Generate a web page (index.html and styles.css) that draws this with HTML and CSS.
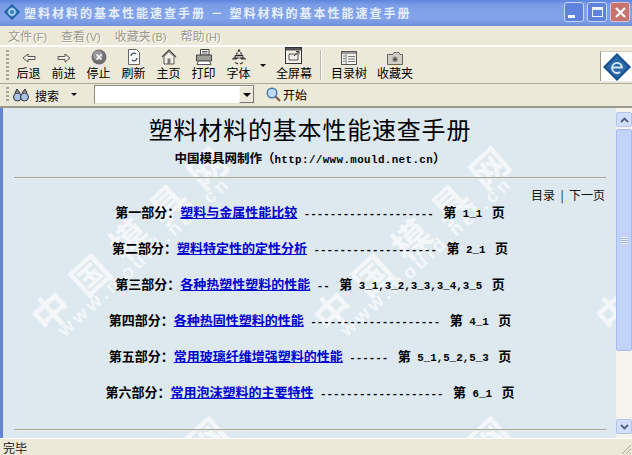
FILE: index.html
```html
<!DOCTYPE html>
<html lang="zh">
<head>
<meta charset="utf-8">
<title>塑料材料的基本性能速查手册</title>
<link rel="stylesheet" href="styles.css">
</head>
<body>
<div class="window">
  <header class="titlebar">
    <svg class="app-icon" viewBox="0 0 16 16" width="16" height="16"><path d="M8 0 16 8 8 16 0 8Z" fill="#1d5a9c"/><path d="M8 2 14 8 8 14 2 8Z" fill="#3f86c8"/><circle cx="8" cy="8" r="3" fill="none" stroke="#bfe0f5" stroke-width="1.3"/></svg>
    <span class="title-text">塑料材料的基本性能速查手册 － 塑料材料的基本性能速查手册</span>
    <div class="caption-btns">
      <span class="cap cap-min"><i></i></span>
      <span class="cap cap-max"><i></i></span>
      <span class="cap cap-close">
        <svg viewBox="0 0 11 11" width="11" height="11"><path d="M1 1 10 10M10 1 1 10" stroke="#fff" stroke-width="2.2"/></svg>
      </span>
    </div>
  </header>

  <nav class="menubar">
    <span class="menu-item">文件<small>(F)</small></span>
    <span class="menu-item">查看<small>(V)</small></span>
    <span class="menu-item">收藏夹<small>(B)</small></span>
    <span class="menu-item">帮助<small>(H)</small></span>
  </nav>

  <div class="toolbar">
    <span class="grip"></span>
    <div class="tool"><svg viewBox="0 0 16 14" width="16" height="14"><path d="M2 7 7 3V5.500H14V8.500H7V11Z" fill="#f1efe3" stroke="#555" stroke-width="1"/></svg><span>后退</span></div>
    <div class="tool"><svg viewBox="0 0 16 14" width="16" height="14"><path d="M14 7 9 3V5.500H2V8.500H9V11Z" fill="#f1efe3" stroke="#555" stroke-width="1"/></svg><span>前进</span></div>
    <div class="tool"><svg viewBox="0 0 16 16" width="16" height="16"><circle cx="8" cy="8" r="7.500" fill="#6f6f72"/><circle cx="7" cy="6.500" r="5" fill="#9a9a9e"/><path d="M5.500 5.500 10.500 10.500M10.500 5.500 5.500 10.500" stroke="#fff" stroke-width="1.600"/></svg><span>停止</span></div>
    <div class="tool"><svg viewBox="0 0 14 16" width="14" height="16"><path d="M1.500 .5H9.500L12.500 3.500V15.500H1.500Z" fill="#f8f8f4" stroke="#666"/><path d="M4 7A3 3 0 0 1 9 5M10 9A3 3 0 0 1 5 11" fill="none" stroke="#456" stroke-width="1.300"/></svg><span>刷新</span></div>
    <div class="tool"><svg viewBox="0 0 16 16" width="16" height="16"><path d="M1 8 8 1 15 8" fill="#eee" stroke="#444" stroke-width="1.200"/><path d="M3 7.500V15H13V7.500L8 2.500Z" fill="#f3f1e6" stroke="#555"/><rect x="6.500" y="9.500" width="3" height="5.500" fill="#777"/></svg><span>主页</span></div>
    <div class="tool"><svg viewBox="0 0 18 16" width="18" height="16"><path d="M5.500 .5H14V6H5.500Z" fill="#fff" stroke="#444"/><path d="M1.500 6H16.500V12H1.500Z" fill="#9f9f9b" stroke="#444"/><path d="M3.500 12H14.500L16 15.500H2Z" fill="#fff" stroke="#555"/><path d="M7 2.500H12.500M7 4H12.500" stroke="#666"/></svg><span>打印</span></div>
    <div class="tool"><svg viewBox="0 0 16 16" width="16" height="16"><path d="M8 1 3 9H13Z" fill="none" stroke="#444" stroke-width="1.400" stroke-dasharray="2 1"/><path d="M1 10H6M6 10 4 8.500M15 10H10M10 10 12 8.500M4 13.500 7 15M12 13.500 9 15" stroke="#333" stroke-width="1.200"/><path d="M5 6.500H11" stroke="#222" stroke-width="1.500"/></svg><span>字体</span></div>
    <span class="drop-arrow"></span>
    <div class="tool tool-wide"><svg viewBox="0 0 18 18" width="18" height="18"><rect x=".5" y=".5" width="16" height="16" fill="#f4f2e8" stroke="#333"/><rect x="1" y="1" width="15" height="2.500" fill="#555"/><path d="M4 13V7H13V13Z" fill="none" stroke="#555"/><path d="M9 9 14 4.500M11 4.500H14V7" fill="none" stroke="#333"/></svg><span>全屏幕</span></div>
    <span class="separator"></span>
    <div class="tool tool-wide"><svg viewBox="0 0 16 14" width="16" height="14"><rect x=".5" y=".5" width="15" height="13" fill="#f5f5f0" stroke="#555"/><rect x="1" y="1" width="14" height="2" fill="#999"/><path d="M5 3V13M2 5H4M2 7.500H4M2 10H4M7 5.500H14M7 8H14M7 10.500H14" stroke="#777"/></svg><span>目录树</span></div>
    <div class="tool tool-wide"><svg viewBox="0 0 16 13" width="16" height="13"><path d="M.5 2.500H6L7 .5H12L13 2.500H15.500V12.500H.5Z" fill="#cfcdc4" stroke="#666"/><path d="M8 4.500V10M5.500 7.300H10.500M6 5.300 10 9.300M10 5.300 6 9.300" stroke="#444"/></svg><span>收藏夹</span></div>
    <div class="logo">
      <svg viewBox="0 0 30 30" width="30" height="30"><path d="M15 1 29 15 15 29 1 15Z" fill="#174f8f"/><path d="M15 4 26 15 15 26 4 15Z" fill="#2a6aa8"/><path d="M10 15.500H20A5 5 0 1 0 18 20" fill="none" stroke="#d5e8f7" stroke-width="1.800"/></svg>
    </div>
  </div>

  <div class="searchbar">
    <span class="grip grip-small"></span>
    <svg class="binoculars" viewBox="0 0 16 15" width="16" height="15"><circle cx="4.500" cy="10" r="4" fill="#a8c3e8" stroke="#333"/><circle cx="11.500" cy="10" r="4" fill="#a8c3e8" stroke="#333"/><path d="M2 6 4 2 7 6M14 6 12 2 9 6" fill="#888" stroke="#333"/></svg>
    <span class="search-label">搜索</span>
    <span class="drop-arrow small-arrow"></span>
    <div class="combo"><span class="combo-btn"><b></b></span></div>
    <svg class="magnifier" viewBox="0 0 15 15" width="15" height="15"><circle cx="6" cy="6" r="4.800" fill="#bcdcf4" stroke="#4a7dae" stroke-width="1.500"/><path d="M9.500 9.500 14 14" stroke="#7a5a40" stroke-width="2"/></svg>
    <span class="go-label">开始</span>
  </div>

  <div class="viewport">
    <main class="page">
      <div class="watermarks" aria-hidden="true">
        <div class="wm-tile wm-a"><span class="wm-big">中国模具网</span><span class="wm-small">www.mould.net.cn</span></div>
        <div class="wm-tile wm-b"><span class="wm-big">中国模具网</span><span class="wm-small">www.mould.net.cn</span></div>
        <div class="wm-tile wm-c"><span class="wm-big">中国模具网</span><span class="wm-small">www.mould.net.cn</span></div>
        <div class="wm-tile wm-d"><span class="wm-big">中国模具网</span></div>
        <div class="wm-tile wm-e"><span class="wm-big">中国模具网</span></div>
      </div>
      <h1 class="doc-title">塑料材料的基本性能速查手册</h1>
      <p class="doc-sub">中国模具网制作（<span class="mono">http://www.mould.net.cn</span>）</p>
      <hr class="rule">
      <p class="doc-nav">目录 &nbsp;| &nbsp;下一页</p>
      <ul class="parts">
        <li>第一部分<span class="colon">：</span><a href="#">塑料与金属性能比较</a><span class="mono dash"> -------------------- </span>第<span class="mono num"> 1_1 </span>页</li>
        <li>第二部分<span class="colon">：</span><a href="#">塑料特定性的定性分析</a><span class="mono dash"> ------------------- </span>第<span class="mono num"> 2_1 </span>页</li>
        <li>第三部分<span class="colon">：</span><a href="#">各种热塑性塑料的性能</a><span class="mono dash"> -- </span>第<span class="mono num"> 3_1,3_2,3_3,3_4,3_5 </span>页</li>
        <li>第四部分<span class="colon">：</span><a href="#">各种热固性塑料的性能</a><span class="mono dash"> -------------------- </span>第<span class="mono num"> 4_1 </span>页</li>
        <li>第五部分<span class="colon">：</span><a href="#">常用玻璃纤维增强塑料的性能</a><span class="mono dash"> ------ </span>第<span class="mono num"> 5_1,5_2,5_3 </span>页</li>
        <li>第六部分<span class="colon">：</span><a href="#">常用泡沫塑料的主要特性</a><span class="mono dash"> ------------------- </span>第<span class="mono num"> 6_1 </span>页</li>
      </ul>
      <hr class="rule rule-end">
    </main>
    <aside class="scrollbar">
      <span class="sb-btn"><svg viewBox="0 0 9 6" width="9" height="6"><path d="M1 5 4.500 1.500 8 5" fill="none" stroke="#4d6185" stroke-width="1.800"/></svg></span>
      <span class="sb-thumb"><i></i></span>
      <span class="sb-track"></span>
      <span class="sb-btn"><svg viewBox="0 0 9 6" width="9" height="6"><path d="M1 1 4.500 4.500 8 1" fill="none" stroke="#4d6185" stroke-width="1.800"/></svg></span>
    </aside>
  </div>

  <footer class="statusbar">
    <span class="status-text">完毕</span>
    <svg class="resize" viewBox="0 0 12 12" width="12" height="12"><path d="M11 2 2 11M11 6 6 11M11 10 10 11" stroke="#aaa79a" stroke-width="1"/></svg>
  </footer>
</div>
</body>
</html>
```

FILE: styles.css
```css
* { box-sizing: border-box; }
html, body { margin: 0; padding: 0; }
body {
  width: 632px;
  height: 455px;
  overflow: hidden;
  font-family: "Noto Sans CJK SC", "Liberation Sans", sans-serif;
  font-size: 12px;
  background: #ece9d8;
}
.window { width: 632px; height: 455px; display: flex; flex-direction: column; }

.titlebar {
  height: 26px;
  flex: none;
  display: flex;
  align-items: center;
  padding: 0 2px 2px 4px;
  background: linear-gradient(#5d85dc, #7b9ee6 20%, #83a4ea 70%, #6f90dc);
}
.app-icon { flex: none; }
.title-text {
  margin-left: 4px;
  color: #e6eefb;
  font-weight: 700;
  font-size: 12px;
  letter-spacing: 2px;
  white-space: nowrap;
}
.caption-btns { margin-left: auto; display: flex; gap: 3px; }
.cap {
  width: 20px;
  height: 20px;
  border: 1px solid #c8d6f6;
  border-radius: 3px;
  display: flex;
  align-items: center;
  justify-content: center;
  background: #5f82dc;
}
.cap-min i { width: 7px; height: 3px; background: #f2f5fd; margin: 8px 6px 0 0; }
.cap-max i { width: 11px; height: 10px; border: 1px solid #eef2fc; border-top-width: 3px; }
.cap-close { background: #c9736f; border-color: #d9c2ce; }

.menubar {
  height: 20px;
  flex: none;
  display: flex;
  align-items: center;
  padding-left: 8px;
  gap: 14px;
  background: #ece9d8;
  border-bottom: 1px solid #fff;
  color: #9a988a;
  text-shadow: 1px 1px 0 #fff;
}
.menu-item small { font-family: "Liberation Sans", sans-serif; font-size: 11px; margin-left: 1px; }

.toolbar {
  height: 38px;
  flex: none;
  display: flex;
  align-items: flex-start;
  padding: 2px 0 0 6px;
  border-bottom: 1px solid #aca899;
  box-shadow: inset 0 1px 0 #fff;
  background: #ece9d8;
}
.grip {
  flex: none;
  width: 3px;
  height: 30px;
  margin: 2px 2px 0 0;
  background: repeating-linear-gradient(#a8a595 0 2px, #ece9d8 2px 4px);
}
.tool {
  flex: none;
  width: 35px;
  height: 32px;
  display: flex;
  flex-direction: column;
  align-items: center;
  justify-content: flex-end;
  color: #000;
  line-height: 14px;
  font-size: 12px;
}
.tool svg { flex: none; margin-bottom: 1px; }
.tool span { white-space: nowrap; }
.tool-wide { width: 46px; }
.drop-arrow {
  flex: none;
  width: 0;
  height: 0;
  margin: 16px 5px 0 4px;
  border: 3px solid transparent;
  border-top: 3px solid #111;
  border-bottom: 0;
}
.separator { flex: none; width: 2px; height: 30px; margin: 2px 4px 0 3px; background: #bcb9a9; border-right: 1px solid #fff; }
.logo {
  margin-left: auto;
  margin-top: 3px;
  width: 32px;
  height: 30px;
  background: #fff;
  border-left: 1px solid #9a9788;
  border-top: 1px solid #cfccbc;
  flex: none;
  display: flex;
  align-items: center;
  justify-content: center;
}

.searchbar {
  height: 24px;
  flex: none;
  display: flex;
  align-items: center;
  padding: 0 0 1px 6px;
  background: #ece9d8;
  border-bottom: 2px solid #9c9a8c;
}
.grip-small { height: 16px; margin: 0 4px 0 0; }
.binoculars { flex: none; }
.search-label { margin: 2px 0 0 6px; }
.small-arrow { margin: 0 0 0 12px; }
.combo {
  margin-left: 17px;
  width: 161px;
  height: 19px;
  flex: none;
  background: #fff;
  border: 1px solid #7f9db9;
  border-color: #8c8a7c #e3e0d2 #e3e0d2 #8c8a7c;
  display: flex;
  justify-content: flex-end;
}
.combo-btn {
  width: 15px;
  background: #ece9d8;
  border: 1px solid #f8f7f0;
  border-color: #f8f7f0 #777 #777 #f8f7f0;
  display: flex;
  align-items: center;
  justify-content: center;
}
.combo-btn b { width: 0; height: 0; border: 4px solid transparent; border-top: 4px solid #000; border-bottom: 0; }
.magnifier { margin-left: 11px; flex: none; }
.go-label { margin-left: 2px; }

.viewport {
  height: 330px;
  flex: none;
  display: flex;
  border-left: 3px solid #6384d8;
}
.page {
  position: relative;
  flex: none;
  width: 613px;
  height: 330px;
  overflow: hidden;
  background: #dde8ef;
  padding: 0 10px 0 11px;
  display: flex;
  flex-direction: column;
}
.watermarks { position: absolute; inset: 0; pointer-events: none; }
.wm-tile { position: absolute; left: 0; top: 0; width: 0; height: 0; }
.wm-b { transform: translateX(282px); }
.wm-c { transform: translateX(564px); }
.wm-d { transform: translate(0, 270px); }
.wm-e { transform: translate(282px, 270px); }
.wm-big, .wm-small {
  position: absolute;
  white-space: nowrap;
  color: #f3f7f9;
  font-weight: 700;
  transform-origin: 0 50%;
  transform: rotate(-42.5deg);
}
.wm-big { left: 33px; top: 193px; font-size: 38px; line-height: 44px; letter-spacing: 15px; }
.wm-small { left: 58px; top: 215px; font-size: 19px; line-height: 20px; font-family: "Liberation Sans", sans-serif; letter-spacing: 3.7px; }

.doc-title {
  position: relative;
  margin: 4px 0 0;
  text-align: center;
  font-size: 24px;
  line-height: 34px;
  font-weight: 400;
  color: #000;
  letter-spacing: 0.8px;
}
.doc-sub {
  position: relative;
  margin: 4px 0 0;
  text-align: center;
  font-size: 12.5px;
  line-height: 16px;
  font-weight: 700;
  color: #000;
}
.mono { font-family: "Liberation Mono", monospace; font-size: 10.83px; font-weight: 700; white-space: pre; line-height: 1; }
.doc-sub .mono { letter-spacing: 0.4px; }
.rule { position: relative; width: 100%; margin: 11px 0 0; border: 0; height: 2px; background: #a8a898; border-bottom: 1px solid #e8eee9; flex: none; }
.doc-nav {
  position: relative;
  margin: 8px 0 0;
  text-align: right;
  padding-right: 1px;
  line-height: 16px;
  color: #111;
}
.parts {
  position: relative;
  list-style: none;
  margin: 1px 0 0;
  padding: 0;
  display: flex;
  flex-direction: column;
  gap: 20px;
}
.parts li {
  height: 16px;
  text-align: center;
  font-size: 13px;
  font-weight: 700;
  line-height: 16px;
  white-space: nowrap;
  color: #000;
}
.colon { font-family: "Noto Sans CJK TC", sans-serif; }
.parts a { color: #0000d0; text-decoration: underline; }
.dash { margin-right: 3px; }
.num { margin-right: 3px; }
.rule-end { margin-top: 29px; }

.scrollbar {
  flex: none;
  width: 16px;
  height: 330px;
  display: flex;
  flex-direction: column;
  padding-top: 4px;
  background: #f5f4ec;
}
.sb-btn {
  height: 15px;
  flex: none;
  display: flex;
  align-items: center;
  justify-content: center;
  background: #d3defa;
  border: 1px solid #b3c5ee;
  border-radius: 2px;
}
.sb-thumb {
  margin-top: 2px;
  height: 222px;
  flex: none;
  background: #c3d2f9;
  border: 1px solid #a8bdf0;
  border-radius: 2px;
  display: flex;
  align-items: center;
  justify-content: center;
}
.sb-thumb i { width: 7px; height: 7px; background: repeating-linear-gradient(#eef2fd 0 1px, #9fb5e8 1px 2px); }
.sb-track { flex: 1; }
.sb-btn:last-child { margin-bottom: 4px; }

.statusbar {
  height: 17px;
  flex: none;
  display: flex;
  align-items: center;
  justify-content: space-between;
  padding-left: 3px;
  background: #ece9d8;
  border-top: 1px solid #fff;
  color: #111;
  line-height: 14px;
}
.status-text { margin-top: 2px; }
.resize { flex: none; align-self: flex-end; }
```
